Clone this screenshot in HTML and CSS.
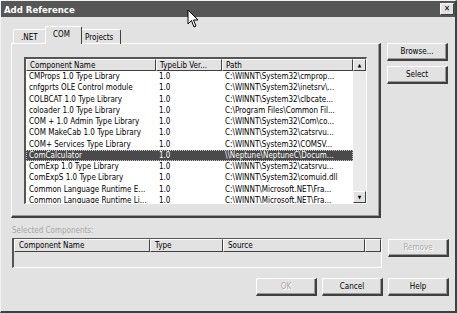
FILE: index.html
```html
<!DOCTYPE html>
<html lang="en">
<head>
    <meta charset="UTF-8">
    <title>Add Reference</title>
    <link rel="stylesheet" href="styles.css">
</head>
<body>

<div class="window">
    <div class="titlebar">
        <span class="title">Add Reference</span>
        <span class="close">&#x2715;</span>
    </div>

    <div class="content">
        <div class="top">
            <div class="tabs-area">
                <div class="tabstrip">
                    <span class="tab">.NET</span>
                    <span class="tab active">COM</span>
                    <span class="tab">Projects</span>
                </div>
                <div class="panel">
                    <div class="list">
                        <div class="list-main">
                            <div class="row header">
                                <span>Component Name</span>
                                <span>TypeLib Ver...</span>
                                <span>Path</span>
                            </div>
                            <div id="rows"></div>
                        </div>
                        <div class="scrollbar">
                            <span class="arrow">&#9650;</span>
                            <span class="track"></span>
                            <span class="arrow">&#9660;</span>
                        </div>
                    </div>
                </div>
            </div>
            <div class="side">
                <button class="btn">Browse...</button>
                <button class="btn">Select</button>
            </div>
        </div>

        <div class="sel-label">Selected Components:</div>

        <div class="middle">
            <div class="list2">
                <div class="row2 header">
                    <span>Component Name</span>
                    <span>Type</span>
                    <span>Source</span>
                    <span></span>
                </div>
            </div>
            <div class="side">
                <button class="btn disabled">Remove</button>
            </div>
        </div>

        <div class="actions">
            <button class="btn disabled">OK</button>
            <button class="btn">Cancel</button>
            <button class="btn">Help</button>
        </div>
    </div>

    <svg class="cursor" width="13" height="20" viewBox="0 0 13 20">
        <path d="M1 1 L1 15 L4.5 11.5 L7 18 L9 17 L6.5 11 L11 11 Z" fill="#fff" stroke="#000" stroke-width="1"/>
    </svg>
</div>

<script>
    var componentes = [
        ["CMProps 1.0 Type Library", "1.0", "C:\\WINNT\\System32\\cmprop..."],
        ["cnfgprts OLE Control module", "1.0", "C:\\WINNT\\System32\\inetsrv\\..."],
        ["COLBCAT 1.0 Type Library", "1.0", "C:\\WINNT\\System32\\clbcate..."],
        ["coloader 1.0 Type Library", "1.0", "C:\\Program Files\\Common Fil..."],
        ["COM + 1.0 Admin Type Library", "1.0", "C:\\WINNT\\System32\\Com\\co..."],
        ["COM MakeCab 1.0 Type Library", "1.0", "C:\\WINNT\\System32\\catsrvu..."],
        ["COM+ Services Type Library", "1.0", "C:\\WINNT\\System32\\COMSV..."],
        ["ComCalculator", "1.0", "\\\\Neptune\\NeptuneC\\Docum..."],
        ["ComExp 1.0 Type Library", "1.0", "C:\\WINNT\\System32\\catsrvu..."],
        ["ComExpS 1.0 Type Library", "1.0", "C:\\WINNT\\System32\\comuid.dll"],
        ["Common Language Runtime E...", "1.0", "C:\\WINNT\\Microsoft.NET\\Fra..."],
        ["Common Language Runtime Li...", "1.0", "C:\\WINNT\\Microsoft.NET\\Fra..."]
    ];

    var contenedor = document.getElementById("rows");
    componentes.forEach(function(c) {
        var fila = document.createElement("div");
        fila.className = "row" + (c[0] == "ComCalculator" ? " selected" : "");
        c.forEach(function(texto) {
            var celda = document.createElement("span");
            celda.textContent = texto;
            fila.appendChild(celda);
        });
        contenedor.appendChild(fila);
    });
</script>

</body>
</html>
```

FILE: styles.css
```css
body {
    margin: 0;
    padding: 0;
    background-color: #e2e2e2;
    font-family: "DejaVu Sans Condensed", "Liberation Sans", sans-serif;
    font-size: 8px;
    color: #000;
}

.window {
    position: relative;
    width: 457px;
    height: 313px;
    box-sizing: border-box;
    border-top: 1px solid #f2f2f2;
    border-left: 1px solid #f2f2f2;
    border-right: 2px solid #404040;
    border-bottom: 2px solid #404040;
    background-color: #e2e2e2;
    overflow: hidden;
}

/* barra de titulo */
.titlebar {
    height: 16px;
    background-color: #565656;
    display: flex;
    align-items: center;
    justify-content: space-between;
    padding: 0 1px 0 3px;
}

.title {
    color: #fff;
    font-weight: bold;
    font-size: 9.5px;
}

.close {
    width: 14px;
    height: 12px;
    box-sizing: border-box;
    background-color: #e2e2e2;
    border-top: 1px solid #fff;
    border-left: 1px solid #fff;
    border-right: 1px solid #404040;
    border-bottom: 1px solid #404040;
    font-size: 8px;
    font-weight: bold;
    line-height: 10px;
    text-align: center;
    color: #000;
}

.content {
    padding: 9px 0 0 10px;
}

.top {
    display: flex;
    gap: 6px;
}

.tabs-area {
    width: 370px;
}

.tabstrip {
    display: flex;
    align-items: flex-end;
    height: 18px;
    padding-left: 2px;
}

.tab {
    height: 15px;
    box-sizing: border-box;
    padding: 3px 6px 0 6px;
    border-top: 1px solid #fff;
    border-left: 1px solid #fff;
    border-right: 1px solid #404040;
    border-radius: 2px 2px 0 0;
    white-space: nowrap;
}

.tab:first-child {
    width: 33px;
    padding-left: 7px;
}

.tab.active {
    height: 18px;
    width: 37px;
    margin: 0 -1px 0 -1px;
    padding: 3px 0 0 7px;
    background-color: #e2e2e2;
    position: relative;
    z-index: 1;
}

.tab:last-child {
    width: 40px;
    padding-left: 3px;
}

.panel {
    height: 175px;
    box-sizing: border-box;
    border-left: 1px solid #fff;
    border-right: 2px solid #404040;
    border-bottom: 2px solid #404040;
    padding: 13px 12px 0 12px;
    box-shadow: inset -1px -1px 0 #9a9a9a;
    margin-top: -1px;
    border-top: 1px solid #fff;
}

.list {
    height: 147px;
    box-sizing: border-box;
    border-top: 2px solid #555;
    border-left: 2px solid #555;
    border-right: 1px solid #fff;
    border-bottom: 1px solid #fff;
    background-color: #fff;
    display: flex;
}

.list-main {
    flex-grow: 1;
    overflow: hidden;
}

.row {
    display: grid;
    grid-template-columns: 130px 66px 1fr;
    height: 11.27px;
    line-height: 11px;
    white-space: nowrap;
}

.row span {
    padding-left: 3px;
    overflow: hidden;
}

.header {
    height: 12px;
    line-height: 11px;
    background-color: #e2e2e2;
}

.header span {
    border-top: 1px solid #fff;
    border-left: 1px solid #fff;
    border-right: 1px solid #404040;
    border-bottom: 1px solid #404040;
    box-sizing: border-box;
}

.row.selected {
    background-color: #4a4a4a;
    color: #fff;
    outline: 1px dotted #c8c8c8;
    outline-offset: -1px;
}

.scrollbar {
    width: 13px;
    display: flex;
    flex-direction: column;
    background-color: #eaeaea;
}

.arrow {
    height: 12px;
    box-sizing: border-box;
    background-color: #e2e2e2;
    border-top: 1px solid #fff;
    border-left: 1px solid #fff;
    border-right: 1px solid #404040;
    border-bottom: 1px solid #404040;
    font-size: 5px;
    line-height: 10px;
    text-align: center;
}

.track {
    flex-grow: 1;
}

/* botones */
.side {
    display: flex;
    flex-direction: column;
    gap: 5px;
    padding-top: 17px;
}

.btn {
    width: 61px;
    height: 18px;
    box-sizing: border-box;
    font-family: inherit;
    font-size: 8px;
    color: #000;
    background-color: #e2e2e2;
    border-top: 1px solid #fff;
    border-left: 1px solid #fff;
    border-right: 2px solid #404040;
    border-bottom: 2px solid #404040;
    box-shadow: inset -1px -1px 0 #9a9a9a;
    padding: 0;
}

.btn.disabled {
    color: #a8a8a8;
    text-shadow: 1px 1px 0 #fff;
}

.sel-label {
    color: #a8a8a8;
    margin: 7px 0 0 1px;
    height: 13px;
    line-height: 11px;
}

.middle {
    display: flex;
    gap: 6px;
}

.middle .side {
    padding-top: 1px;
}

.list2 {
    width: 370px;
    height: 30px;
    box-sizing: border-box;
    margin-left: 1px;
    border-top: 1px solid #555;
    border-left: 2px solid #555;
    border-right: 1px solid #fff;
    border-bottom: 1px solid #fff;
}

.row2 {
    display: grid;
    grid-template-columns: 136px 73px 142px 1fr;
    white-space: nowrap;
}

.row2 span {
    padding-left: 4px;
}

.actions {
    display: flex;
    justify-content: flex-end;
    gap: 5px;
    margin-top: 10px;
    padding-right: 6px;
}

.cursor {
    position: absolute;
    left: 186px;
    top: 8px;
}
```
